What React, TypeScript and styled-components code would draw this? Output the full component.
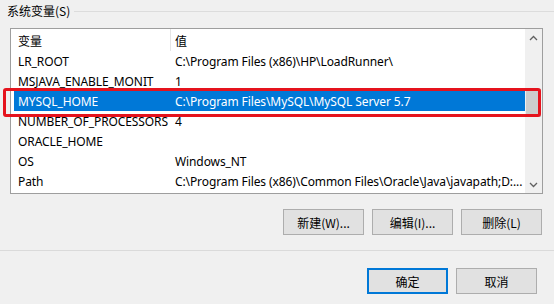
import React from "react";
import styled, { createGlobalStyle } from "styled-components";

const Global = createGlobalStyle`
  html, body { margin: 0; padding: 0; background: #f0f0f0; }
  body { font-family: "Noto Sans", "Noto Sans CJK SC", sans-serif; }
`;

const Window = styled.div`
  position: relative;
  width: 554px;
  height: 304px;
  background: #f0f0f0;
  overflow: hidden;
  font-size: 12px;
  color: #000;
`;

const GroupBox = styled.div`
  display: flex;
  flex-direction: column;
  padding-bottom: 15px;
  border-bottom: 1px solid #dadada;
`;

const GroupHeader = styled.div`
  display: flex;
  align-items: center;
  height: 22px;
`;

const GroupLabel = styled.span`
  padding: 0 4px 0 7px;
  line-height: 22px;
  white-space: nowrap;
  font-family: "Noto Sans CJK SC", sans-serif;
`;

const GroupLine = styled.div`
  flex: 1;
  height: 1px;
  background: #dcdcdc;
`;

const ListBox = styled.div`
  display: flex;
  margin: 6px 11px 0 10px;
  height: 166px;
  border: 1px solid #9e9e9e;
  background: #fff;
  box-sizing: border-box;
`;

const ListContent = styled.div`
  flex: 1;
  min-width: 0;
  display: flex;
  flex-direction: column;
  overflow: hidden;
`;

const HeaderRow = styled.div`
  display: flex;
  height: 22px;
  align-items: center;
  flex-shrink: 0;
  font-family: "Noto Sans CJK SC", sans-serif;
`;

const HeaderCell = styled.div<{ $w?: number; $divider?: boolean }>`
  ${(p) => (p.$w ? `width: ${p.$w}px; flex-shrink: 0;` : "flex: 1;")}
  height: 100%;
  display: flex;
  align-items: center;
  box-sizing: border-box;
  padding-left: ${(p) => (p.$w ? 7 : 4)}px;
  ${(p) => (p.$divider ? "border-right: 1px solid #e5e5e5;" : "")}
`;

const Row = styled.div<{ $selected?: boolean }>`
  display: flex;
  height: 20px;
  flex-shrink: 0;
  align-items: center;
  margin-left: ${(p) => (p.$selected ? 3 : 0)}px;
  background: ${(p) => (p.$selected ? "#0078d7" : "transparent")};
  color: ${(p) => (p.$selected ? "#fff" : "#000")};
  white-space: nowrap;
  letter-spacing: -0.1px;
`;

const Cell = styled.div<{ $w?: number; $pl: number }>`
  ${(p) => (p.$w ? `width: ${p.$w}px; flex-shrink: 0;` : "flex: 1; min-width: 0;")}
  padding-left: ${(p) => p.$pl}px;
  box-sizing: border-box;
  overflow: hidden;
  white-space: nowrap;
`;

const ScrollBar = styled.div`
  width: 17px;
  flex-shrink: 0;
  display: flex;
  flex-direction: column;
  background: #f0f0f0;
`;

const ScrollArrow = styled.div`
  height: 17px;
  display: flex;
  align-items: center;
  justify-content: center;
  flex-shrink: 0;
`;

const ScrollTrack = styled.div`
  flex: 1;
  display: flex;
  flex-direction: column;
  padding-top: 43px;
`;

const Thumb = styled.div`
  height: 28px;
  margin: 0 1px;
  background: #cdcdcd;
`;

const ButtonRow = styled.div<{ $pr: number; $pt: number }>`
  display: flex;
  justify-content: flex-end;
  gap: 8px;
  padding-right: ${(p) => p.$pr}px;
  padding-top: ${(p) => p.$pt}px;
`;

const Button = styled.button<{ $default?: boolean }>`
  width: 81px;
  height: 26px;
  box-sizing: border-box;
  background: #e1e1e1;
  border: ${(p) => (p.$default ? "2px solid #0078d7" : "1px solid #adadad")};
  font-family: "Noto Sans CJK SC", "Noto Sans", sans-serif;
  font-size: 12px;
  color: #000;
  padding: 0;
  margin: 0;
`;

const Highlight = styled.div`
  position: absolute;
  left: 3px;
  top: 88px;
  width: 538px;
  height: 29px;
  box-sizing: border-box;
  border: 3px solid #e5131d;
  border-radius: 3px;
  pointer-events: none;
`;

const Chevron = ({ down }: { down?: boolean }) => (
  <svg width="9" height="6" viewBox="0 0 9 6">
    <polyline
      points={down ? "1,1 4.5,4.5 8,1" : "1,5 4.5,1.5 8,5"}
      fill="none"
      stroke="#606060"
      strokeWidth="1.3"
    />
  </svg>
);

const rows: [string, string][] = [
  ["LR_ROOT", "C:\\Program Files (x86)\\HP\\LoadRunner\\"],
  ["MSJAVA_ENABLE_MONIT", "1"],
  ["MYSQL_HOME", "C:\\Program Files\\MySQL\\MySQL Server 5.7"],
  ["NUMBER_OF_PROCESSORS", "4"],
  ["ORACLE_HOME", ""],
  ["OS", "Windows_NT"],
  ["Path", "C:\\Program Files (x86)\\Common Files\\Oracle\\Java\\javapath;D:..."],
];

export default function App() {
  return (
    <Window>
      <Global />
      <GroupBox>
        <GroupHeader>
          <GroupLabel>系统变量(S)</GroupLabel>
          <GroupLine />
        </GroupHeader>
        <ListBox>
          <ListContent>
            <HeaderRow>
              <HeaderCell $w={160} $divider>变量</HeaderCell>
              <HeaderCell>值</HeaderCell>
            </HeaderRow>
            {rows.map(([k, v], i) => {
              const sel = i === 2;
              return (
                <Row key={k} $selected={sel}>
                  <Cell $w={sel ? 157 : 160} $pl={sel ? 4 : 7}>{k}</Cell>
                  <Cell $pl={4}>{v}</Cell>
                </Row>
              );
            })}
          </ListContent>
          <ScrollBar>
            <ScrollArrow>
              <Chevron />
            </ScrollArrow>
            <ScrollTrack>
              <Thumb />
            </ScrollTrack>
            <ScrollArrow>
              <Chevron down />
            </ScrollArrow>
          </ScrollBar>
        </ListBox>
        <ButtonRow $pr={12} $pt={15}>
          <Button>新建(W)...</Button>
          <Button>编辑(I)...</Button>
          <Button>删除(L)</Button>
        </ButtonRow>
      </GroupBox>
      <ButtonRow $pr={17} $pt={17}>
        <Button $default>确定</Button>
        <Button>取消</Button>
      </ButtonRow>
      <Highlight />
    </Window>
  );
}
